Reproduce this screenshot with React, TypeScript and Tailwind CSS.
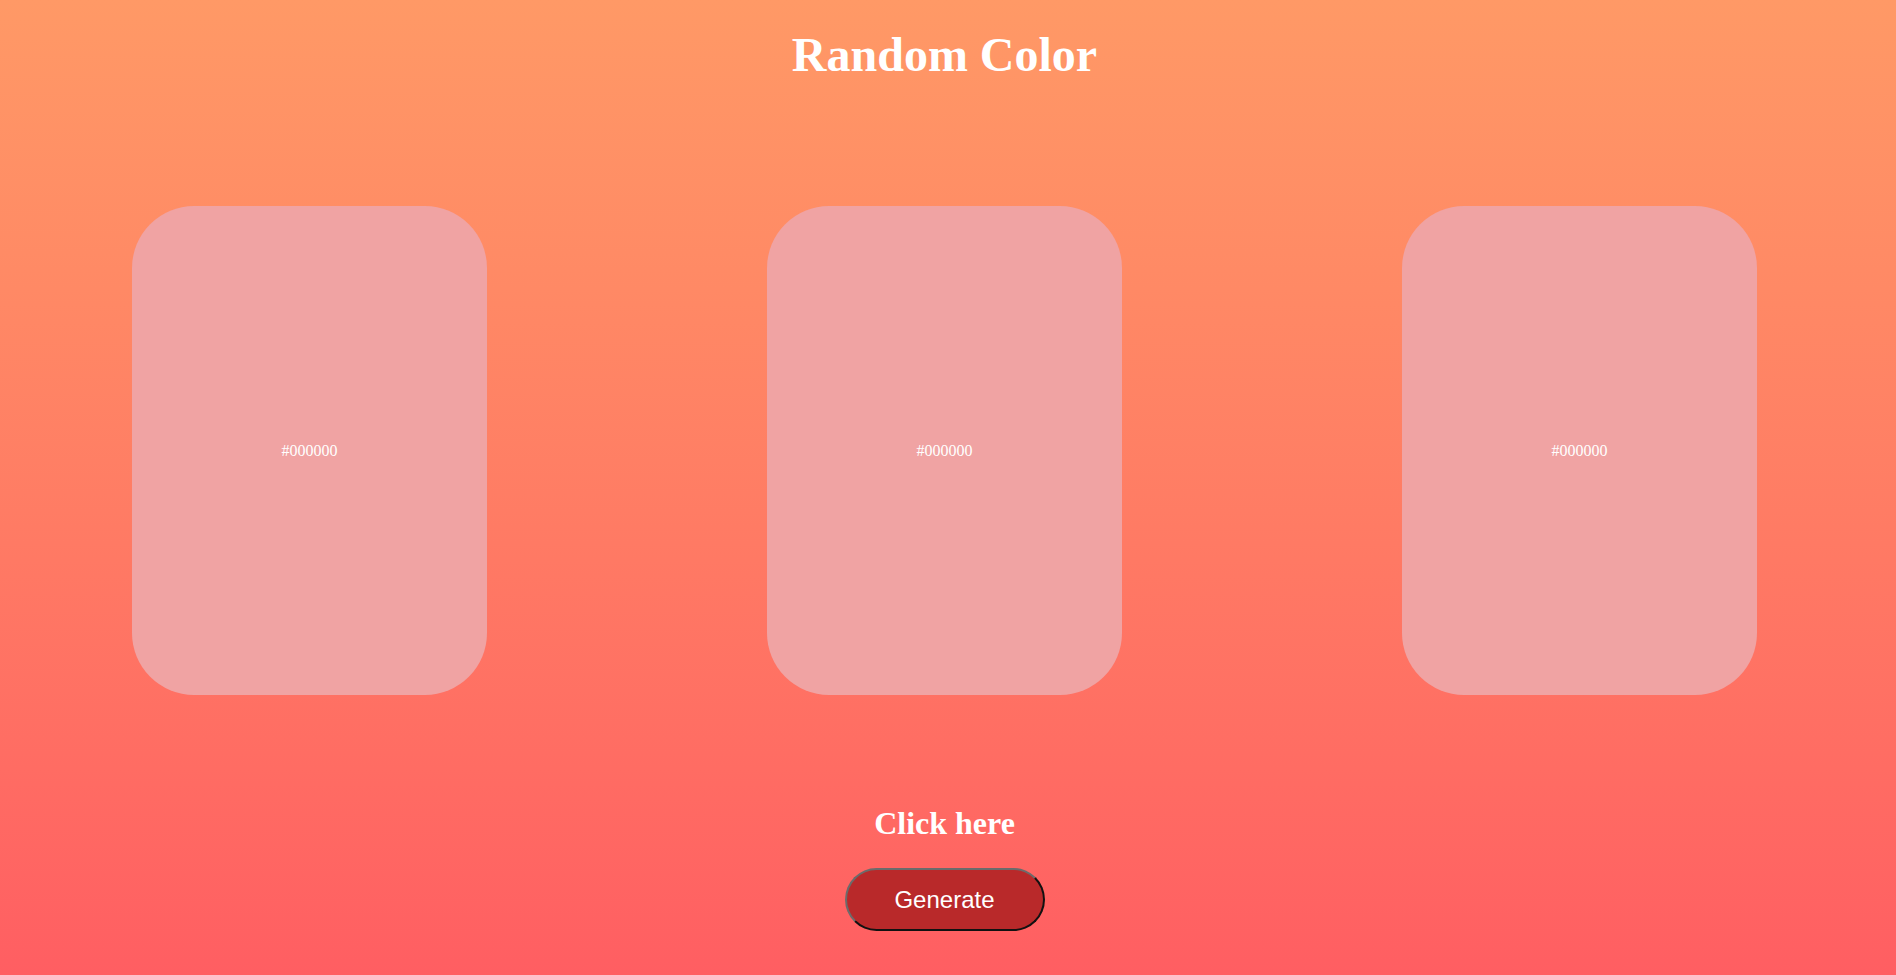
const colors = ['#000000', '#000000', '#000000']

function ColorCard({ hex }: { hex: string }) {
  return (
    <div className="flex h-[489px] w-[355px] items-center justify-center rounded-[62px] bg-[#f0a3a3]">
      <span className="text-[16px] text-white">{hex}</span>
    </div>
  )
}

export default function App() {
  return (
    <main className="flex h-[975px] w-full flex-col items-center bg-gradient-to-b from-[#ff9966] to-[#ff5e62] pr-[7px] font-['Liberation_Serif',serif] text-white">
      <h1 className="mt-[27px] text-[48px] leading-[55px] font-bold">Random Color</h1>

      <div className="mt-[124px] flex w-full justify-between px-[132px]">
        {colors.map((c, i) => (
          <ColorCard key={i} hex={c} />
        ))}
      </div>

      <h2 className="mt-[110px] text-[32px] leading-[37px] font-bold">Click here</h2>
      <button className="mt-[26px] h-[63px] w-[200px] rounded-full border-2 border-t-[#6b6b6b] border-r-[#111] border-b-[#111] border-l-[#6b6b6b] bg-[#b9292a] font-['Liberation_Sans',sans-serif] text-[24px] text-white">
        Generate
      </button>
    </main>
  )
}
